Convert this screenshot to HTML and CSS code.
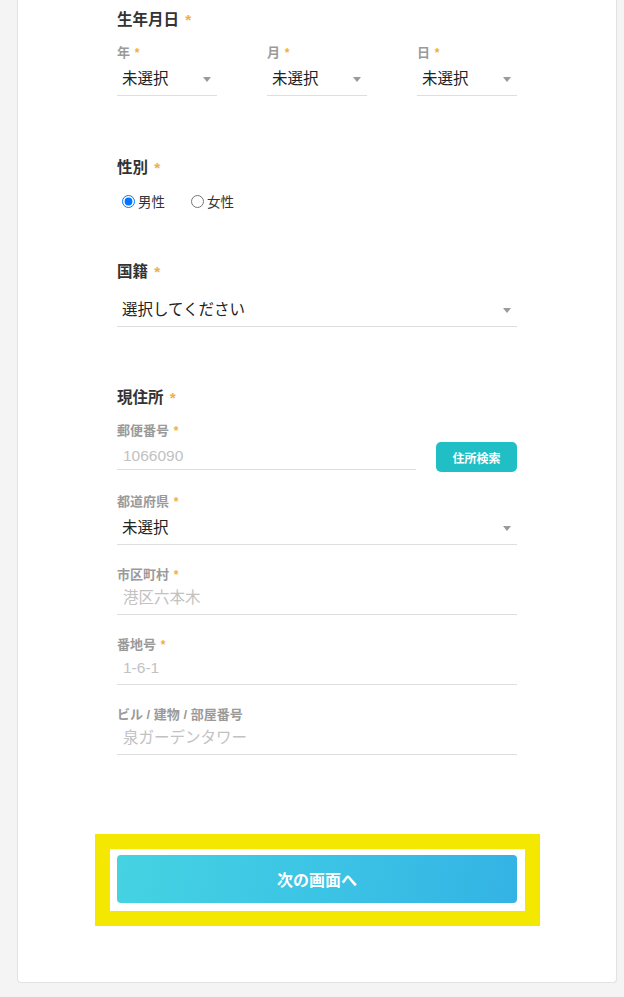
FILE: index.html
```html
<!DOCTYPE html>
<html lang="ja">
<head>
<meta charset="utf-8">
<title>フォーム</title>
<link rel="stylesheet" href="styles.css">
</head>
<body>
<div class="card">
  <form class="form">
    <section class="section section-birth">
      <h2 class="heading">生年月日 <span class="req">*</span></h2>
      <div class="date-row">
        <div class="field">
          <label class="sublabel">年 <span class="req">*</span></label>
          <div class="select-wrap"><select class="select"><option>未選択</option></select></div>
        </div>
        <div class="field">
          <label class="sublabel">月 <span class="req">*</span></label>
          <div class="select-wrap"><select class="select"><option>未選択</option></select></div>
        </div>
        <div class="field">
          <label class="sublabel">日 <span class="req">*</span></label>
          <div class="select-wrap"><select class="select"><option>未選択</option></select></div>
        </div>
      </div>
    </section>

    <section class="section section-gender">
      <h2 class="heading heading-gender">性別 <span class="req">*</span></h2>
      <div class="radio-row">
        <label class="radio"><input type="radio" name="sex" checked>男性</label>
        <label class="radio"><input type="radio" name="sex">女性</label>
      </div>
    </section>

    <section class="section section-nation">
      <h2 class="heading heading-nation">国籍 <span class="req">*</span></h2>
      <div class="select-wrap"><select class="select"><option>選択してください</option></select></div>
    </section>

    <section class="section section-address">
      <h2 class="heading">現住所 <span class="req">*</span></h2>
      <div class="field-group">
        <div class="field">
          <label class="sublabel">郵便番号 <span class="req">*</span></label>
          <div class="postal-row">
            <input class="input input-postal" type="text" placeholder="1066090">
            <button type="button" class="search-btn">住所検索</button>
          </div>
        </div>
        <div class="field">
          <label class="sublabel">都道府県 <span class="req">*</span></label>
          <div class="select-wrap"><select class="select"><option>未選択</option></select></div>
        </div>
        <div class="field">
          <label class="sublabel">市区町村 <span class="req">*</span></label>
          <input class="input" type="text" placeholder="港区六本木">
        </div>
        <div class="field">
          <label class="sublabel">番地号 <span class="req">*</span></label>
          <input class="input" type="text" placeholder="1-6-1">
        </div>
        <div class="field">
          <label class="sublabel">ビル / 建物 / 部屋番号</label>
          <input class="input" type="text" placeholder="泉ガーデンタワー">
        </div>
      </div>
    </section>

    <div class="submit-highlight">
      <button type="button" class="submit-btn">次の画面へ</button>
    </div>
  </form>
</div>
</body>
</html>
```

FILE: styles.css
```css
* { box-sizing: border-box; }

html, body {
  margin: 0;
  padding: 0;
  background: #f4f4f4;
  font-family: "Liberation Sans", "Noto Sans CJK JP", sans-serif;
  color: #222;
}

.card {
  width: 600px;
  margin: 0 0 14px 17px;
  background: #fff;
  border: 1px solid #e2e2e2;
  border-top: none;
  border-radius: 0 0 4px 4px;
  padding: 10px 0 56px 99px;
}

.form {
  width: 400px;
  display: flex;
  flex-direction: column;
}

.section { margin: 0; }
.section-birth { margin-bottom: 62px; }
.section-gender { margin-bottom: 51px; }
.section-nation { margin-bottom: 61px; }
.section-address { margin-bottom: 79px; }

.heading {
  margin: 0 0 14px;
  height: 20px;
  line-height: 20px;
  font-size: 15.5px;
  font-weight: 700;
  color: #333;
}
.heading .req { margin-left: 2px; }
.heading-gender { margin-bottom: 13px; }
.heading-nation { margin-bottom: 11px; }

.req {
  color: #efb03f;
  font-weight: 700;
}

.sublabel {
  display: block;
  height: 18px;
  line-height: 18px;
  font-size: 13px;
  font-weight: 700;
  color: #9a9a9a;
}
.sublabel .req { font-size: 12px; margin-left: 1px; }

.date-row {
  display: grid;
  grid-template-columns: repeat(3, 100px);
  column-gap: 50px;
}

.select-wrap {
  position: relative;
}
.select-wrap::after {
  content: "";
  position: absolute;
  right: 6px;
  top: 15px;
  border-left: 4px solid transparent;
  border-right: 4px solid transparent;
  border-top: 5px solid #9a9a9a;
  pointer-events: none;
}

.select {
  display: block;
  width: 100%;
  height: 34px;
  margin: 0;
  padding: 0 20px 0 5px;
  border: none;
  border-bottom: 1px solid #dedede;
  border-radius: 0;
  background: transparent;
  appearance: none;
  -webkit-appearance: none;
  font-family: "Liberation Sans", "Noto Sans CJK JP", sans-serif;
  font-size: 15.5px;
  color: #222;
  outline: none;
}

.radio-row {
  display: flex;
  align-items: center;
  height: 20px;
  gap: 21px;
}
.radio {
  display: flex;
  align-items: center;
  font-size: 13.5px;
  color: #333;
}
.radio input {
  width: 13px;
  height: 13px;
  margin: 0 3px 0 5px;
}

.field-group {
  display: flex;
  flex-direction: column;
  gap: 21px;
}

.input {
  display: block;
  width: 100%;
  height: 31px;
  margin: 0;
  padding: 0 6px 2px;
  border: none;
  border-bottom: 1px solid #dedede;
  border-radius: 0;
  background: transparent;
  font-family: "Liberation Sans", "Noto Sans CJK JP", sans-serif;
  font-size: 15.5px;
  color: #222;
  outline: none;
}
.input::placeholder { color: #c2c2c2; }

.postal-row {
  display: flex;
  align-items: flex-start;
  gap: 20px;
}
.input-postal {
  width: 299px;
  height: 30px;
  padding-top: 2px;
  padding-bottom: 0;
}

.search-btn {
  width: 81px;
  height: 30px;
  margin-top: 2px;
  border: none;
  border-radius: 5px;
  background: #20bfc6;
  color: #fff;
  font-family: "Liberation Sans", "Noto Sans CJK JP", sans-serif;
  font-size: 12px;
  font-weight: 700;
  padding: 0;
}

.submit-highlight {
  margin: 0 -23px 0 -22px;
  border: 15px solid #f4e800;
  padding: 6px 8px 8px 7px;
  background: #fff;
}

.submit-btn {
  display: block;
  width: 400px;
  height: 48px;
  border: none;
  border-radius: 4px;
  background: linear-gradient(100deg, #45d3e2 0%, #3cc4e5 50%, #33b3e4 100%);
  color: #fff;
  font-family: "Liberation Sans", "Noto Sans CJK JP", sans-serif;
  font-size: 16px;
  font-weight: 700;
  padding: 0;
}
```
